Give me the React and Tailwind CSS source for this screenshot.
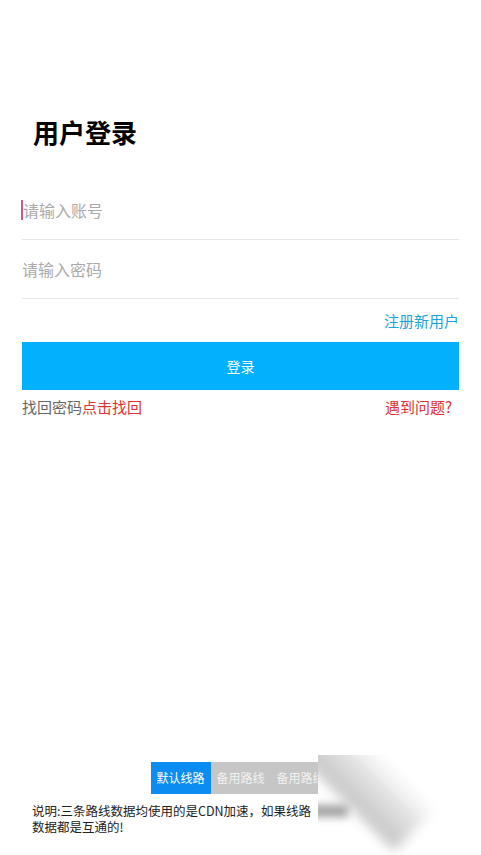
import { useState } from 'react';

const FONT = { fontFamily: '"Noto Sans CJK SC", "Noto Sans", sans-serif' };

const ROUTES = ['默认线路', '备用路线', '备用路线'];

export default function App() {
  const [route, setRoute] = useState(0);

  return (
    <div style={FONT} className="relative min-h-[855px] bg-white flex flex-col overflow-hidden">
      <div className="px-[22px] pt-[112px]">
        <h1 className="pl-[11px] text-[26px] font-bold text-black leading-[40px]">用户登录</h1>

        {/* Inputs */}
        <div className="mt-[29px]">
          <div className="h-[59px] border-b border-[#e6e6e6] flex items-center">
            <span className="w-[2px] h-[20px] bg-[#d8557f] ml-[-1px]" />
            <input
              placeholder="请输入账号"
              className="flex-1 outline-none text-[16px] text-[#333] placeholder:text-[#aaa] bg-transparent"
            />
          </div>
          <div className="h-[59px] border-b border-[#e6e6e6] flex items-center">
            <input
              type="password"
              placeholder="请输入密码"
              className="flex-1 outline-none text-[16px] text-[#333] placeholder:text-[#aaa] bg-transparent"
            />
          </div>
        </div>

        <div className="flex justify-end mt-[11px]">
          <a className="text-[15px] text-[#1aa3d9] leading-[22px]">注册新用户</a>
        </div>

        <button className="mt-[10px] w-full h-[48px] bg-[#03b0fd] text-white text-[14px]">登录</button>

        <div className="flex justify-between mt-[6px] text-[15px] leading-[22px]">
          <span className="text-[#666]">
            找回密码<span className="text-[#e03131]">点击找回</span>
          </span>
          <span className="text-[#e03131] pr-[7px]">遇到问题?</span>
        </div>
      </div>

      {/* Route switcher */}
      <div className="mt-auto pb-[20px]">
        <div className="flex justify-center">
          {ROUTES.map((r, i) => (
            <button
              key={i}
              onClick={() => setRoute(i)}
              className={
                'w-[60px] h-[32px] text-[12px] ' +
                (route === i ? 'bg-[#0a8cf0] text-white' : 'bg-[#c6c6c6] text-[#f2f2f2]')
              }
            >
              {r}
            </button>
          ))}
        </div>
        <div className="mt-[9px] px-[32px] text-[12.5px] leading-[16px] text-[#222]">
          <p>说明:三条路线数据均使用的是CDN加速，如果线路</p>
          <p>数据都是互通的!</p>
        </div>
      </div>

      {/* page-curl smear over the bottom right */}
      <div className="absolute left-[318px] top-[755px] w-[163px] h-[100px] bg-white overflow-hidden">
        <div className="absolute left-[-30px] top-[-10px] w-[60px] h-[150px] -rotate-45 origin-top-left blur-[6px] bg-gradient-to-r from-[#c4c4c4] via-[#dedede] to-white" />
        <div className="absolute left-[-10px] top-[50px] w-[40px] h-[12px] blur-[4px] bg-[#a0a0a0]" />
      </div>
    </div>
  );
}
